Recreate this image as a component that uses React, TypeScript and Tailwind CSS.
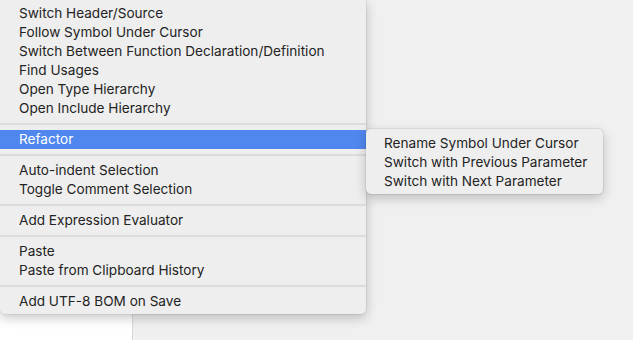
import React from "react"

type Group = { label: string; active?: boolean }[]

const groups: Group[] = [
  [
    { label: "Switch Header/Source" },
    { label: "Follow Symbol Under Cursor" },
    { label: "Switch Between Function Declaration/Definition" },
    { label: "Find Usages" },
    { label: "Open Type Hierarchy" },
    { label: "Open Include Hierarchy" },
  ],
  [{ label: "Refactor", active: true }],
  [{ label: "Auto-indent Selection" }, { label: "Toggle Comment Selection" }],
  [{ label: "Add Expression Evaluator" }],
  [{ label: "Paste" }, { label: "Paste from Clipboard History" }],
  [{ label: "Add UTF-8 BOM on Save" }],
]

const submenu = [
  "Rename Symbol Under Cursor",
  "Switch with Previous Parameter",
  "Switch with Next Parameter",
]

function Item({ label, active, pad = "pl-[19px]" }: { label: string; active?: boolean; pad?: string }) {
  return (
    <div
      className={`h-[19px] flex items-center ${pad} whitespace-nowrap ${
        active ? "bg-[#4f87ef] text-white" : "text-[#232323]"
      }`}
    >
      {label}
    </div>
  )
}

export default function App() {
  return (
    <div
      className="relative w-[633px] h-[340px] overflow-hidden flex bg-[#f0f0f0] text-[13.6px]"
      style={{ fontFamily: "Inter, 'Liberation Sans', sans-serif" }}
    >
      {/* editor background */}
      <div className="w-[133px] h-full bg-white border-r border-[#d9d9d9]" />
      <div className="flex-1 h-full bg-[#f0f0f0]" />

      {/* main context menu */}
      <div className="absolute left-0 top-0 w-[366px] pt-[4px] pb-[3px] bg-[#eeeeee] rounded-b-[5px] shadow-[0_4px_12px_rgba(0,0,0,0.22),0_0_0_1px_rgba(0,0,0,0.06)]">
        {groups.map((g, gi) => (
          <React.Fragment key={gi}>
            {gi > 0 && (
              <div className="h-[12px] flex items-center">
                <div className="w-full h-[2px] bg-[#dcdcdc]" />
              </div>
            )}
            {g.map((it) => (
              <Item key={it.label} label={it.label} active={it.active} />
            ))}
          </React.Fragment>
        ))}
      </div>

      {/* refactor submenu */}
      <div className="absolute left-[366px] top-[129px] w-[237px] pt-[5px] pb-[3px] bg-[#eeeeee] rounded-[5px] shadow-[0_4px_12px_rgba(0,0,0,0.22),0_0_0_1px_rgba(0,0,0,0.06)]">
        {submenu.map((s) => (
          <Item key={s} label={s} pad="pl-[18px]" />
        ))}
      </div>
    </div>
  )
}
